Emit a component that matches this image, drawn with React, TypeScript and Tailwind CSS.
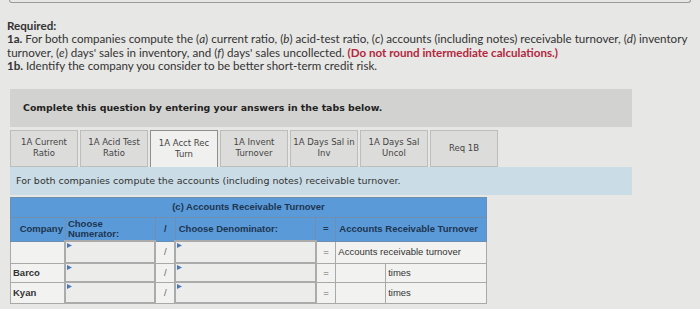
import React from "react";

const tabs = [
  ["1A Current", "Ratio"],
  ["1A Acid Test", "Ratio"],
  ["1A Acct Rec", "Turn"],
  ["1A Invent", "Turnover"],
  ["1A Days Sal in", "Inv"],
  ["1A Days Sal", "Uncol"],
  ["Req 1B", ""],
];

function Marker() {
  return (
    <svg width="5" height="5" viewBox="0 0 5 5" className="absolute left-[1px] top-[1px]">
      <path d="M0 0 L5 2.5 L0 5 Z" fill="#4a78b8" />
    </svg>
  );
}

function InputCell({ w }: { w: string }) {
  return (
    <td className={`${w} border-[2px] border-[#ababab] bg-[#ececea] relative p-0`}>
      <Marker />
    </td>
  );
}

export default function App() {
  const sans = { fontFamily: "Lato, 'Open Sans', sans-serif" };
  const verd = { fontFamily: "'DejaVu Sans', Verdana, sans-serif" };
  const arial = { fontFamily: "'Liberation Sans', Arial, sans-serif" };
  return (
    <div className="w-[700px] h-[309px] bg-[#e7e7e5] overflow-hidden relative">
      <div className="mx-[9px] h-[3px] border-x border-b border-[#9a9a9a] rounded-b-[5px]" />
      <div className="pl-[7px] pr-[2px] mt-[16px] text-[11.6px] leading-[13.4px] text-[#333]" style={sans}>
        <div className="font-bold">Required:</div>
        <div className="whitespace-nowrap">
          <span className="font-bold">1a.</span> For both companies compute the (<i>a</i>) current ratio, (<i>b</i>) acid-test ratio, (<i>c</i>) accounts (including notes) receivable turnover, (<i>d</i>) inventory
        </div>
        <div>
          turnover, (<i>e</i>) days' sales in inventory, and (<i>f</i>) days' sales uncollected.{" "}
          <span className="font-bold text-[#b3263d]">(Do not round intermediate calculations.)</span>
        </div>
        <div>
          <span className="font-bold">1b.</span> Identify the company you consider to be better short-term credit risk.
        </div>
      </div>

      <div className="ml-[10px] w-[622px] mt-[16px] h-[38px] bg-[#d2d2d0] flex items-center pl-[13px]">
        <span className="text-[9.4px] font-bold text-[#222]" style={verd}>
          Complete this question by entering your answers in the tabs below.
        </span>
      </div>

      <div className="ml-[10px] mt-[3px] flex gap-[2px] h-[37px] items-end">
        {tabs.map((t, i) => {
          const active = i === 2;
          return (
            <div
              key={i}
              className={`w-[68px] h-[37px] flex flex-col items-center justify-center text-[8.5px] leading-[11px] text-[#444] border ${
                active ? "bg-[#f0f0ee] border-[#8f8f8f] border-b-0" : "bg-[#dcdcda] border-[#bdbdbb]"
              }`}
              style={verd}
            >
              <span className="whitespace-nowrap">{t[0]}</span>
              {t[1] && <span>{t[1]}</span>}
            </div>
          );
        })}
      </div>

      <div className="ml-[10px] w-[622px] h-[28px] bg-[#cadce6] flex items-center pl-[6px]">
        <span className="text-[9.5px] text-[#333]" style={verd}>
          For both companies compute the accounts (including notes) receivable turnover.
        </span>
      </div>

      <div className="ml-[10px] mt-[2px]" style={arial}>
        <table className="border-collapse w-[477px] text-[9.5px] text-[#222]">
          <tbody>
            <tr className="h-[20px] bg-[#5b9ad8]">
              <td colSpan={7} className="text-center font-bold text-[#1d3550] border border-[#6f8fb0]">
                (c) Accounts Receivable Turnover
              </td>
            </tr>
            <tr className="h-[24px] bg-[#5b9ad8] font-bold text-[#1d3550]">
              <td className="w-[55px] text-right pr-[2px] border border-[#6f8fb0]">Company</td>
              <td className="w-[90px] pl-[2px] leading-[10px] border border-[#6f8fb0]">
                Choose
                <br />
                Numerator:
              </td>
              <td className="w-[20px] text-center border border-[#6f8fb0]">/</td>
              <td className="w-[141px] pl-[3px] border border-[#6f8fb0]">Choose Denominator:</td>
              <td className="w-[20px] text-center border border-[#6f8fb0]">=</td>
              <td colSpan={2} className="pl-[3px] border border-[#6f8fb0]">Accounts Receivable Turnover</td>
            </tr>
            <tr className="h-[22px] bg-[#f2f2f0]">
              <td className="border border-[#a9a9a9]" />
              <InputCell w="w-[90px]" />
              <td className="text-center text-[#666] border border-[#a9a9a9]">/</td>
              <InputCell w="w-[141px]" />
              <td className="text-center text-[#666] border border-[#a9a9a9]">=</td>
              <td colSpan={2} className="pl-[2px] text-[#333] border border-[#a9a9a9]">Accounts receivable turnover</td>
            </tr>
            {["Barco", "Kyan"].map((c, i) => (
              <tr key={c} className={`${i === 0 ? "h-[19px]" : "h-[21px]"} bg-[#f2f2f0]`}>
                <td className="pl-[2px] font-bold text-[#333] border border-[#a9a9a9]">{c}</td>
                <InputCell w="w-[90px]" />
                <td className="text-center text-[#666] border border-[#a9a9a9]">/</td>
                <InputCell w="w-[141px]" />
                <td className="text-center text-[#666] border border-[#a9a9a9]">=</td>
                <td className="w-[50px] border border-[#a9a9a9]" />
                <td className="w-[101px] pl-[2px] text-[#333] border border-[#a9a9a9]">times</td>
              </tr>
            ))}
          </tbody>
        </table>
      </div>
    </div>
  );
}
